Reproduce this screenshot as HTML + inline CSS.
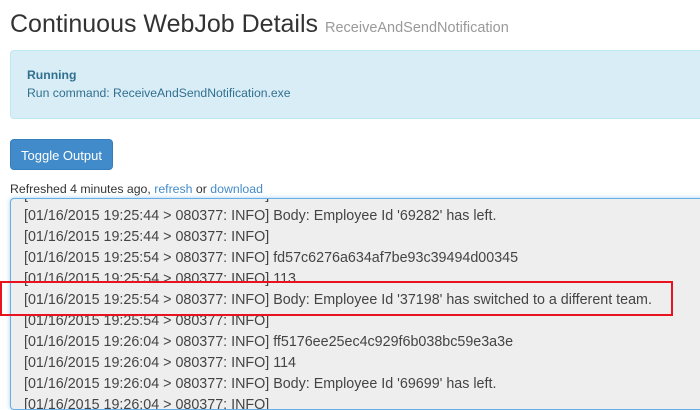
<!DOCTYPE html>
<html><head><style>
body{margin:0;width:700px;height:401px;overflow:hidden;background:#fff;font-family:"Liberation Sans",sans-serif;color:#333;position:relative}
.a{position:absolute;white-space:nowrap}
#t{left:10px;top:10px;font-size:25px;color:#333}
#t small{font-size:14.5px;color:#999}
#al{left:10px;top:50px;width:700px;height:67px;background:#d9edf7;border:1px solid #bce8f1;border-radius:4px;color:#31708f;font-size:12.2px}
#btn{left:10px;top:139px;width:103px;height:31px;background:#428bca;border:1px solid #357ebd;border-radius:4px;color:#fff;font-size:13px;line-height:31px;text-align:center;box-sizing:border-box}
#rf{left:10px;top:182px;font-size:12.3px}
#rf span{color:#428bca}
#box{left:10px;top:198px;width:700px;height:210px;background:#eee;border:1px solid #66afe9;border-radius:4px;overflow:hidden;box-shadow:0 0 4px rgba(102,175,233,.6)}
.l{position:absolute;left:13px;font-size:14.3px;color:#444;white-space:nowrap}
#red{left:0;top:281px;width:673px;height:35px;border:2px solid #e8131f;box-sizing:border-box}
</style></head><body>
<div class="a" id="t">Continuous WebJob Details <small>ReceiveAndSendNotification</small></div>
<div class="a" id="al"><div style="position:absolute;left:16px;top:17px;font-weight:bold">Running</div><div style="position:absolute;left:16px;top:35px">Run command: ReceiveAndSendNotification.exe</div></div>
<div class="a" id="btn">Toggle Output</div>
<div class="a" id="rf">Refreshed 4 minutes ago, <span>refresh</span> or <span>download</span></div>
<div class="a" id="box">
<div class="l" style="top:-12px">[01/16/2015 19:25:44 &gt; 080377: INFO] 112</div>
<div class="l" style="top:9px">[01/16/2015 19:25:44 &gt; 080377: INFO] Body: Employee Id '69282' has left.</div>
<div class="l" style="top:30px">[01/16/2015 19:25:44 &gt; 080377: INFO]</div>
<div class="l" style="top:51px">[01/16/2015 19:25:54 &gt; 080377: INFO] fd57c6276a634af7be93c39494d00345</div>
<div class="l" style="top:72px">[01/16/2015 19:25:54 &gt; 080377: INFO] 113</div>
<div class="l" style="top:93px">[01/16/2015 19:25:54 &gt; 080377: INFO] Body: Employee Id '37198' has switched to a different team.</div>
<div class="l" style="top:114px">[01/16/2015 19:25:54 &gt; 080377: INFO]</div>
<div class="l" style="top:135px">[01/16/2015 19:26:04 &gt; 080377: INFO] ff5176ee25ec4c929f6b038bc59e3a3e</div>
<div class="l" style="top:156px">[01/16/2015 19:26:04 &gt; 080377: INFO] 114</div>
<div class="l" style="top:177px">[01/16/2015 19:26:04 &gt; 080377: INFO] Body: Employee Id '69699' has left.</div>
<div class="l" style="top:198px">[01/16/2015 19:26:04 &gt; 080377: INFO]</div>
</div>
<div class="a" id="red"></div>
</body></html>
